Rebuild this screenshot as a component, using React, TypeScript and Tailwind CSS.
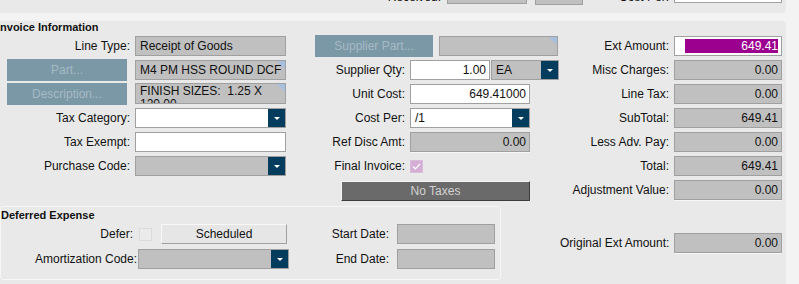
import type { ReactNode } from "react";

function Caret() {
  return (
    <div className="flex h-full w-[17px] shrink-0 items-center justify-center bg-[#033c5c]">
      <svg width="6" height="3" viewBox="0 0 6 3">
        <path d="M0 0h6L3 3z" fill="#fff" />
      </svg>
    </div>
  );
}

function Corner() {
  return (
    <svg className="absolute right-0 top-0" width="8" height="8" viewBox="0 0 8 8">
      <path d="M0 0h8v8z" fill="#a7c0dd" />
    </svg>
  );
}

type FieldProps = {
  className: string;
  children?: ReactNode;
  right?: boolean;
  dropdown?: boolean;
  corner?: boolean;
};

function Field({ className, children, right, dropdown, corner }: FieldProps) {
  return (
    <div
      className={`relative flex h-5 shrink-0 items-center overflow-hidden border border-[#a0a0a0] ${className}`}
    >
      <div
        className={`min-w-0 flex-1 truncate ${right ? "pr-[3px] text-right" : "pl-1"}`}
      >
        {children}
      </div>
      {dropdown && <Caret />}
      {corner && <Corner />}
    </div>
  );
}

function DisabledButton({ className, children }: { className: string; children: ReactNode }) {
  return (
    <div
      className={`-my-px flex h-[22px] shrink-0 items-center justify-center bg-[#7b98a7] text-[#a6bac5] ${className}`}
    >
      {children}
    </div>
  );
}

function Label({ className, children }: { className: string; children: ReactNode }) {
  return <div className={`shrink-0 whitespace-nowrap text-right ${className}`}>{children}</div>;
}

const gray = "bg-[#c0c0c0]";
const white = "bg-white";

const totals: [string, string, boolean][] = [
  ["Misc Charges:", "0.00", false],
  ["Line Tax:", "0.00", false],
  ["SubTotal:", "649.41", false],
  ["Less Adv. Pay:", "0.00", false],
  ["Total:", "649.41", false],
  ["Adjustment Value:", "0.00", true],
];

export default function App() {
  return (
    <div className="min-h-screen w-full bg-[#f3f3f3] font-['Liberation_Sans',Arial,sans-serif] text-[12px] leading-[14px] text-[#111]">
      {/* tail of the panel above */}
      <div className="h-[13px] w-[786px] overflow-hidden rounded-br-[4px] bg-[#e9e9e9]">
        <div className="-mt-[16px] flex h-5 items-center">
          <Label className="w-[441px] pt-[6px]">Received:</Label>
          <Field className={`ml-[6px] w-[80px] ${gray}`} />
          <Field className={`ml-[8px] mt-[2px] w-[48px] ${gray}`} />
          <Label className="w-[86px] pt-[6px]">Cost Per:</Label>
          <Field className={`-mt-[2px] ml-[5px] w-[108px] ${white}`} />
        </div>
      </div>

      <div className="mt-[8px] flex h-[263px] w-[786px] rounded-tr-[4px] bg-[#e9e9e9]">
        <div className="w-[560px]">
          <div className="-ml-[3px] h-[15px] text-[11px] font-bold leading-[13px]">
            Invoice Information
          </div>

          <div className="flex">
            {/* left column */}
            <div className="flex w-[290px] flex-col gap-1">
              <div className="flex h-5 items-center">
                <Label className="w-[130px]">Line Type:</Label>
                <Field className={`ml-[5px] w-[151px] ${gray}`}>Receipt of Goods</Field>
              </div>
              <div className="flex h-5 items-center">
                <DisabledButton className="ml-[7px] w-[120px]">Part...</DisabledButton>
                <Field className={`ml-[8px] w-[151px] ${gray}`} corner>
                  M4 PM HSS ROUND DCF
                </Field>
              </div>
              <div className="flex h-5 items-center">
                <DisabledButton className="ml-[7px] w-[120px]">Description...</DisabledButton>
                <div
                  className={`relative ml-[8px] -mt-px h-[21px] w-[151px] overflow-hidden border border-[#a0a0a0] pl-1 pt-[1px] leading-[13px] ${gray}`}
                >
                  <div className="whitespace-pre">FINISH SIZES:  1.25 X</div>
                  <div>120.00</div>
                  <Corner />
                </div>
              </div>
              <div className="flex h-5 items-center">
                <Label className="w-[130px]">Tax Category:</Label>
                <Field className={`ml-[5px] w-[151px] ${white}`} dropdown />
              </div>
              <div className="flex h-5 items-center">
                <Label className="w-[130px]">Tax Exempt:</Label>
                <Field className={`ml-[5px] w-[151px] ${white}`} />
              </div>
              <div className="flex h-5 items-center">
                <Label className="w-[130px]">Purchase Code:</Label>
                <Field className={`ml-[5px] w-[151px] ${gray}`} dropdown />
              </div>
            </div>

            {/* middle column */}
            <div className="flex w-[270px] flex-col gap-1">
              <div className="flex h-5 items-center">
                <DisabledButton className="ml-[25px] w-[118px]">Supplier Part...</DisabledButton>
                <Field className={`ml-[6px] w-[119px] ${gray}`} corner />
              </div>
              <div className="flex h-5 items-center">
                <Label className="w-[115px]">Supplier Qty:</Label>
                <Field className={`ml-[5px] w-[80px] ${white}`} right>
                  1.00
                </Field>
                <Field className={`ml-px w-[68px] ${gray}`} dropdown>
                  EA
                </Field>
              </div>
              <div className="flex h-5 items-center">
                <Label className="w-[115px]">Unit Cost:</Label>
                <Field className={`ml-[5px] w-[120px] ${white}`} right>
                  649.41000
                </Field>
              </div>
              <div className="flex h-5 items-center">
                <Label className="w-[115px]">Cost Per:</Label>
                <Field className={`ml-[5px] w-[120px] ${white}`} dropdown>
                  /1
                </Field>
              </div>
              <div className="flex h-5 items-center">
                <Label className="w-[115px]">Ref Disc Amt:</Label>
                <Field className={`ml-[5px] w-[120px] shadow-[0_1px_0_#f7f7f7] ${gray}`} right>
                  0.00
                </Field>
              </div>
              <div className="flex h-5 items-center">
                <Label className="w-[115px]">Final Invoice:</Label>
                <div className="ml-[5px] flex h-[13px] w-[13px] items-center justify-center border border-[#d9bcd9] bg-[#d5aed5]">
                  <svg width="9" height="7" viewBox="0 0 9 7">
                    <path d="M1 3.5l2.3 2.3L8 1" fill="none" stroke="#fff" strokeWidth="1.2" />
                  </svg>
                </div>
              </div>
              <div className="flex h-5 items-center">
                <div className="ml-[51px] mt-[2px] flex h-5 w-[189px] items-center justify-center border border-b-[#3c3c3c] border-l-[#f4f4f4] border-r-[#3c3c3c] border-t-[#f4f4f4] bg-[#6a6a6a] text-[#d2d2d2]">
                  No Taxes
                </div>
              </div>
            </div>
          </div>

          {/* deferred expense */}
          <div className="mt-[6px] h-[74px] w-[501px] rounded-[3px] border border-[#f6f6f6]">
            <div className="h-[15px] pt-[2px] text-[11px] font-bold leading-[13px]">Deferred Expense</div>
            <div className="mt-[2px] flex">
              <div className="flex w-[289px] flex-col gap-[5px]">
                <div className="flex h-5 items-center">
                  <Label className="w-[132px]">Defer:</Label>
                  <div className="ml-[6px] h-[13px] w-[13px] border border-[#dcdcdc] bg-[#ebebeb]" />
                  <div className="ml-[9px] flex h-5 w-[126px] items-center justify-center border border-b-[#a0a0a0] border-l-[#f8f8f8] border-r-[#a0a0a0] border-t-[#f8f8f8] bg-[#e6e6e6]">
                    Scheduled
                  </div>
                </div>
                <div className="flex h-5 items-center">
                  <Label className="w-[136px]">Amortization Code:</Label>
                  <Field className={`ml-px w-[151px] ${gray}`} dropdown />
                </div>
              </div>
              <div className="flex flex-col gap-[5px]">
                <div className="flex h-5 items-center">
                  <Label className="w-[99px]">Start Date:</Label>
                  <Field className={`ml-[8px] w-[98px] ${gray}`} />
                </div>
                <div className="flex h-5 items-center">
                  <Label className="w-[99px]">End Date:</Label>
                  <Field className={`ml-[8px] w-[98px] ${gray}`} />
                </div>
              </div>
            </div>
          </div>
        </div>

        {/* totals column */}
        <div className="w-[226px] pt-[15px]">
          <div className="flex flex-col gap-1">
            <div className="flex h-5 items-center">
              <Label className="w-[109px]">Ext Amount:</Label>
              <div className="ml-[5px] flex h-5 w-[108px] items-center justify-end border border-[#a0a0a0] bg-white pr-[3px]">
                <div className="flex h-[14px] w-[93px] items-center justify-end bg-[#9b008f] text-white">
                  649.41
                </div>
              </div>
            </div>
            {totals.map(([label, value, shadow]) => (
              <div key={label} className="flex h-5 items-center">
                <Label className="w-[109px]">{label}</Label>
                <Field
                  className={`ml-[5px] w-[108px] ${gray} ${shadow ? "shadow-[0_1px_0_#f7f7f7]" : ""}`}
                  right
                >
                  {value}
                </Field>
              </div>
            ))}
          </div>
          <div className="mt-[33px] flex h-5 items-center">
            <Label className="w-[109px]">Original Ext Amount:</Label>
            <Field className={`ml-[5px] w-[108px] shadow-[0_1px_0_#f7f7f7] ${gray}`} right>
              0.00
            </Field>
          </div>
        </div>
      </div>
    </div>
  );
}
